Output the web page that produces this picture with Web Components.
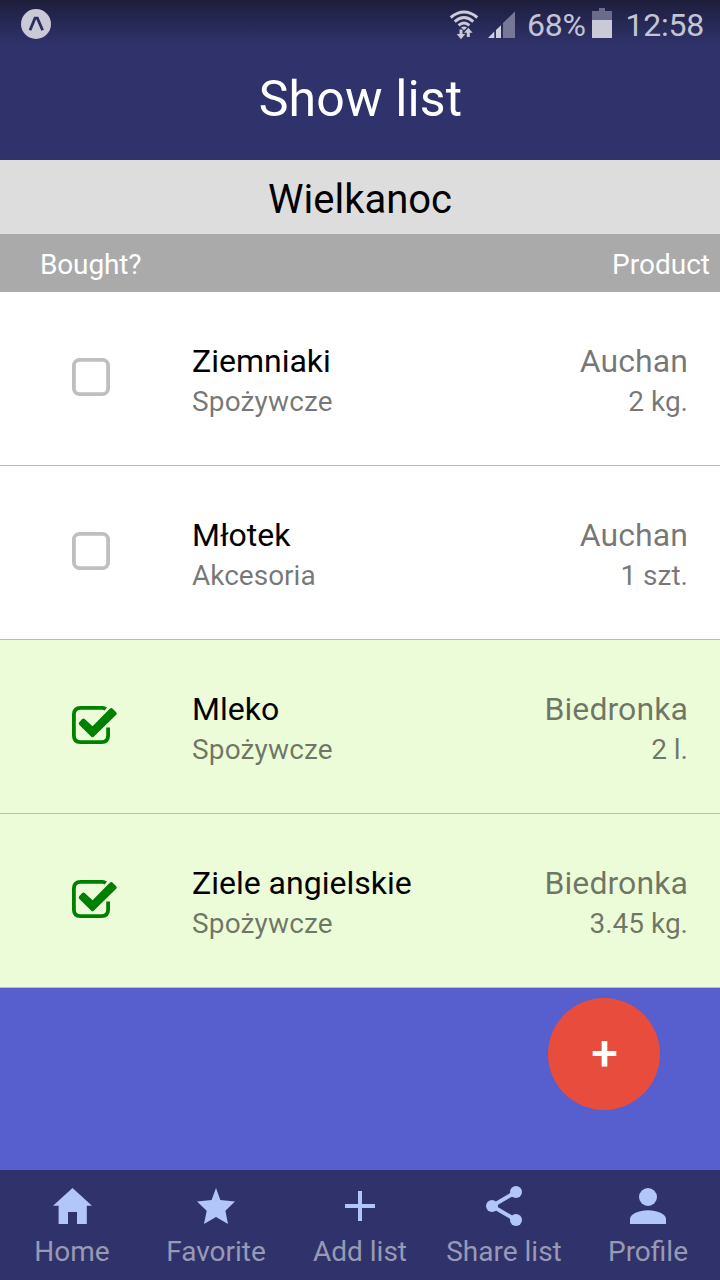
<!DOCTYPE html>
<html lang="pl">
<head>
<meta charset="utf-8">
<title>Show list</title>
<style>
html,body{margin:0;height:100%}
body{font-family:Roboto,"Noto Sans",sans-serif;overflow:hidden}
</style>
</head>
<body>
<shopping-app>
  <app-header slot="header" heading="Show list"></app-header>
  <list-title>Wielkanoc</list-title>
  <list-columns><span>Bought?</span><span slot="end">Product</span></list-columns>
  <product-row name="Ziemniaki" category="Spożywcze" shop="Auchan" amount="2 kg."></product-row>
  <product-row name="Młotek" category="Akcesoria" shop="Auchan" amount="1 szt."></product-row>
  <product-row name="Mleko" category="Spożywcze" shop="Biedronka" amount="2 l." checked></product-row>
  <product-row name="Ziele angielskie" category="Spożywcze" shop="Biedronka" amount="3.45 kg." checked></product-row>
  <add-button slot="action">+</add-button>
  <tab-bar slot="footer">
    <tab-item icon="home">Home</tab-item>
    <tab-item icon="star">Favorite</tab-item>
    <tab-item icon="add">Add list</tab-item>
    <tab-item icon="share">Share list</tab-item>
    <tab-item icon="person">Profile</tab-item>
  </tab-bar>
</shopping-app>
<script>
const define = (name, render) => customElements.define(name, class extends HTMLElement {
  constructor() {
    super();
    this.attachShadow({ mode: 'open' });
  }
  connectedCallback() {
    const t = document.createElement('template');
    t.innerHTML = render(this);
    this.shadowRoot.replaceChildren(t.content.cloneNode(true));
  }
});

define('shopping-app', () => `
<style>
:host{display:flex;flex-direction:column;height:1280px;width:720px;position:relative;background:#575fcf}
main{flex:1;display:flex;flex-direction:column}
.action{position:absolute;right:60px;bottom:170px}
</style>
<slot name="header"></slot><main><slot></slot></main><div class="action"><slot name="action"></slot></div><slot name="footer"></slot>`);

define('status-bar', () => `
<style>
:host{display:flex;height:50px;align-items:center;box-sizing:border-box;padding:0 16px 0 20px;color:#c4c4d4;font-size:32px;font-weight:400}
svg{display:block;flex:none}
.app{margin:-2px auto 0 0}
.wifi{margin-right:9px}.signal{margin:-1px 11px 0 0}.battery{margin:-4px 14px 0 6px}
span{line-height:50px;white-space:nowrap;letter-spacing:-.25px}
</style>
<svg class="app" width="32" height="32" viewBox="0 0 32 32"><circle cx="16" cy="16" r="15" fill="#c9c9d8"/><path d="M10 22.3 15 10.2h2.4l5.2 12.1" fill="none" stroke="#2b2d60" stroke-width="2.8"/></svg>
<svg class="wifi" width="30" height="32" viewBox="0 0 30 32" fill="none" stroke="#c9c9d8"><path d="M1.7 8.5Q15-2.5 28.3 8.5" stroke-width="3"/><path d="M5.7 12.6Q15 4.6 24.3 12.6M9.6 16.3Q15 11.6 20.4 16.3" stroke-width="2.9"/><path d="M12 18.6Q15 16.4 18 18.6L15 21.2z" fill="#c9c9d8" stroke="none"/><path d="M12 20.5v7M19.3 28v-6" stroke-width="3"/><path d="M7.7 25h8.6L12 30.3zM15 23.8h8.6L19.3 18.8z" fill="#c9c9d8" stroke="none"/></svg>
<svg class="signal" width="28" height="28" viewBox="0 0 28 28"><path d="M0 27 6.3 20.6V27zM8 19 13 14.3V27H8z" fill="#d1d1df"/><path d="M15 12 27 .5V27H15z" fill="#777895"/></svg>
<span>68%</span>
<svg class="battery" width="20" height="30" viewBox="0 0 20 30"><path d="M0 3h7V0h6v3h7v9H0z" fill="#6b6c8a"/><path d="M0 12h20v18H0z" fill="#c9c9d8"/></svg>
<span>12:58</span>`);

define('app-header', el => `
<style>
:host{display:flex;flex-direction:column;height:160px;background:linear-gradient(#1e1e3b 0,#22234a 12px,#30336b 45px)}
h1{margin:0;padding-left:1px;font-weight:400;font-size:50px;letter-spacing:.15px;line-height:98px;text-align:center;color:#fff}
</style>
<status-bar></status-bar><h1>${el.getAttribute('heading')}</h1>`);

define('list-title', () => `
<style>:host{display:block;height:74px;line-height:80px;background:#ddd;color:#000;text-align:center;font-size:40px}</style><slot></slot>`);

define('list-columns', () => `
<style>:host{display:flex;justify-content:space-between;height:58px;box-sizing:border-box;padding:0 10px 0 40px;line-height:61px;background:#aaa;color:#fff;font-size:28px}
slot:not([name]){letter-spacing:-.15px}</style>
<slot></slot><slot name="end"></slot>`);

define('check-mark', el => `
<style>:host{display:block;width:48px;height:40px}svg{display:block}</style>
<svg width="48" height="40" viewBox="0 0 48 40" fill="none" stroke-width="3.8">${el.hasAttribute('checked')
  ? `<path d="M33.8 3Q32.5 1.9 30.5 1.9H8.5Q1.9 1.9 1.9 8.5v21Q1.9 36.1 8.5 36.1h21Q36.1 36.1 36.1 29.5V21.5" stroke="green"/><path d="M7.4 15.9 10.2 13.1Q11.6 11.9 13 13.2L20.5 20.3 37.8 2.7Q39.3 1.4 40.7 2.7L44.2 6.2Q45.4 7.4 44.2 8.7L21.7 30.8Q20.5 31.8 19.3 30.8L7.4 18.9Q6 17.4 7.4 15.9z" fill="green"/>`
  : `<rect x="1.9" y="1.9" width="34.2" height="34.2" rx="5.6" stroke="#bfbfbf"/>`}</svg>`);

define('product-row', el => `
<style>
:host{display:grid;grid-template-columns:120px 1fr auto;height:174px;box-sizing:border-box;border-bottom:1px solid #bbb;padding:50px 32px 0 72px;background:#fff;color:#000}
:host([checked]){background:#edfcd8}
check-mark{margin-top:16px}
.name,.shop{font-size:32px;line-height:38px}
.sub{font-size:28px;line-height:38px;margin-top:3px;color:rgba(0,0,0,.54)}
.shop{color:rgba(0,0,0,.54);letter-spacing:.08px}
.end{text-align:right}
.long{letter-spacing:.15px}
</style>
<check-mark ${el.hasAttribute('checked') ? 'checked' : ''}></check-mark>
<div><div class="name">${el.getAttribute('name')}</div><div class="sub ${el.getAttribute('category') === 'Spożywcze' ? 'long' : ''}">${el.getAttribute('category')}</div></div>
<div class="end"><div class="shop">${el.getAttribute('shop')}</div><div class="sub">${el.getAttribute('amount')}</div></div>`);

define('add-button', () => `
<style>:host{display:flex;align-items:center;justify-content:center;width:112px;height:112px;box-sizing:border-box;padding:0 0 1px 1px;border-radius:50%;background:#e74c3c;color:#fff;font-size:48px;font-weight:500;line-height:111px}</style><slot></slot>`);

define('tab-bar', () => `
<style>:host{display:grid;grid-template-columns:repeat(5,1fr);height:110px;background:#30336b}</style><slot></slot>`);

const icons = {
  home: '<path d="M24.5 6 44 23.7h-5.2V42H29V30h-9v12h-9.4V23.7H5z"/>',
  star: '<path d="M24 6l4.3 12L43 19.6l-9.6 9.2L36 42l-12-7-12 7 2.7-13.2L5 19.6 19.6 18z"/>',
  add: '<path d="M9 22h13V9h4v13h13v4H26v13h-4V26H9z"/>',
  share: '<circle cx="36" cy="10" r="6"/><circle cx="12" cy="24" r="6"/><circle cx="36" cy="38" r="6"/><path d="M36 10 12 24 36 38" fill="none" stroke="#b3c6fa" stroke-width="4"/>',
  person: '<circle cx="24" cy="15" r="9"/><path d="M6 42v-5C6 32 15 28.2 24 28.2S42 32 42 37v5z"/>'
};
define('tab-item', el => `
<style>
:host{display:flex;flex-direction:column;align-items:center;padding-top:12px;font-size:28px;line-height:33px;color:#9899b5;white-space:nowrap}
svg{display:block;fill:#b3c6fa;margin-bottom:5px}
</style>
<svg width="48" height="48" viewBox="0 0 48 48">${icons[el.getAttribute('icon')]}</svg><slot></slot>`);
</script>
</body>
</html>
